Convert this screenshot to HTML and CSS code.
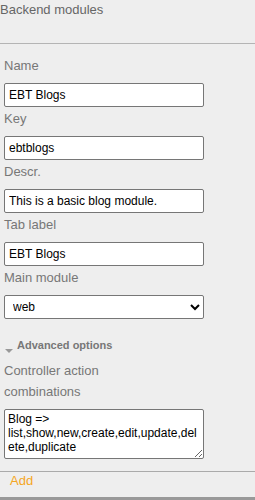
FILE: index.html
```html
<!DOCTYPE html>
<html lang="en">
<head>
    <meta charset="UTF-8">
    <meta name="viewport" content="width=device-width, initial-scale=1.0">
    <title>Backend modules</title>
    <link rel="stylesheet" href="styles.css">
</head>
<body>
    <div class="panel-title">Backend modules</div>

    <form class="module-form">
        <label class="field-label">Name</label>
        <input class="field-input" type="text" value="EBT Blogs">

        <label class="field-label">Key</label>
        <input class="field-input" type="text" value="ebtblogs">

        <label class="field-label">Descr.</label>
        <input class="field-input" type="text" value="This is a basic blog module.">

        <label class="field-label">Tab label</label>
        <input class="field-input" type="text" value="EBT Blogs">

        <label class="field-label">Main module</label>
        <select class="field-input field-select">
            <option>web</option>
        </select>

        <div class="advanced-toggle"><span class="caret"></span>Advanced options</div>

        <label class="field-label wrap-label">Controller action combinations</label>
        <textarea class="field-input field-area">Blog => list,show,new,create,edit,update,delete,duplicate</textarea>
    </form>

    <div class="panel-footer">
        <a class="add-link" href="#">Add</a>
    </div>
    <div class="panel-bottom"></div>
</body>
</html>
```

FILE: styles.css
```css
body { margin: 0; background: #eeeeee; font-family: "Liberation Sans", Arial, sans-serif; }
.panel-title { font-size: 13px; line-height: 16px; color: #666; padding-top: 2px; height: 41px; border-bottom: 1px solid #b4b4b4; }
.module-form { padding: 10px 4px 0; }
.field-label { display: block; font-size: 13px; line-height: 20px; color: #777; margin: 2px 0 7px; }
.field-input { display: block; box-sizing: border-box; width: 200px; height: 24px; margin: 0; padding: 1px 4px; border: 1px solid #767676; border-radius: 2px; background: #fff; font-family: "Liberation Sans", Arial, sans-serif; font-size: 12px; color: #000; }
.field-select { padding: 0 2px 0 4px; }
.advanced-toggle { margin-top: 18px; font-size: 11px; line-height: 16px; font-weight: bold; color: #777; }
.caret { display: inline-block; width: 0; height: 0; margin: 0 4px 0 1px; border-left: 4px solid transparent; border-right: 4px solid transparent; border-top: 4px solid #999; vertical-align: -4px; }
.wrap-label { width: 120px; line-height: 21px; margin: 7px 0 7px; }
.field-area { height: 50px; padding: 2px 3px; line-height: 14px; resize: vertical; }
.panel-footer { margin-top: 12px; border-top: 1px solid #aaa; height: 25px; padding-left: 10px; }
.add-link { display: block; font-size: 13px; line-height: 17px; color: #f5a623; text-decoration: none; }
.panel-bottom { height: 3px; background: #999; }
```
